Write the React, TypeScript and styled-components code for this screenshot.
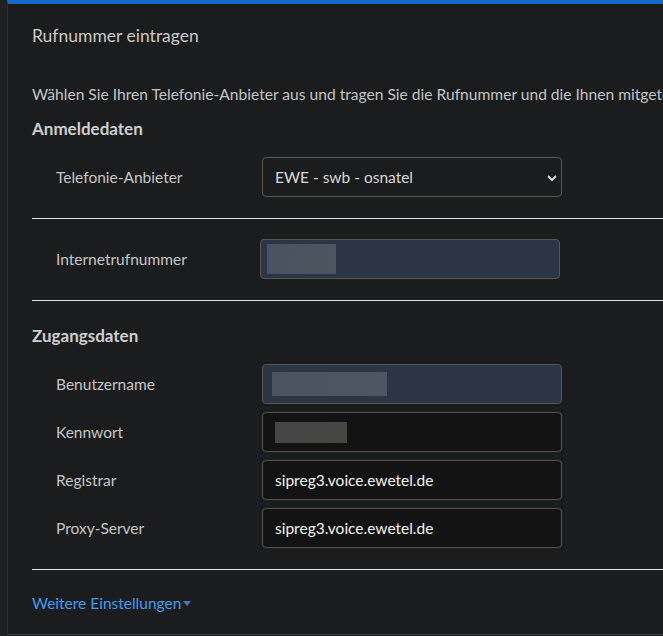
import React from 'react';
import styled, { createGlobalStyle } from 'styled-components';

const Global = createGlobalStyle`
  html, body {
    margin: 0;
    padding: 0;
    background: #1e2022;
    overflow: hidden;
  }
  body {
    font-family: Lato, "Liberation Sans", sans-serif;
  }
`;

const Page = styled.div`
  display: flex;
  height: 636px;
  width: 663px;
  overflow: hidden;
`;

const Strip = styled.div`
  width: 7px;
  flex: none;
  background: #1e2022;
`;

const Panel = styled.div`
  flex: none;
  width: 900px;
  height: 630px;
  background: #1b1c1e;
  border-left: 1px solid #2d2f31;
  border-top: 4px solid #176ac3;
  border-bottom: 1px solid #3a3c3e;
  padding-left: 24px;
  box-sizing: content-box;
`;

const Title = styled.h2`
  margin: 20px 0 0;
  font-size: 17.5px;
  line-height: 24px;
  font-weight: 400;
  color: #c9c9c9;
`;

const Intro = styled.p`
  margin: 36px 0 0;
  font-size: 15.6px;
  line-height: 20px;
  color: #c4c4c4;
  white-space: nowrap;
`;

const Heading = styled.h3<{ $top: number }>`
  margin: ${(p) => p.$top}px 0 0;
  font-size: 17px;
  line-height: 24px;
  font-weight: 700;
  color: #cfcfcf;
`;

const Rows = styled.div<{ $top: number }>`
  display: flex;
  flex-direction: column;
  gap: 8px;
  margin-top: ${(p) => p.$top}px;
`;

const Row = styled.div`
  display: flex;
  align-items: center;
  padding-left: 24px;
`;

const Label = styled.label`
  width: 206px;
  flex: none;
  font-size: 15.5px;
  color: #c6c6c6;
`;

const Field = styled.div<{ $bg: string; $shift?: number }>`
  position: relative;
  width: 300px;
  height: 40px;
  box-sizing: border-box;
  margin-left: ${(p) => p.$shift || 0}px;
  border: 1px solid #5a5750;
  border-radius: 4px;
  background: ${(p) => p.$bg};
  display: flex;
  align-items: center;
  padding-left: 12px;
  font-size: 15.5px;
  color: #f4f4f4;
`;

const Select = styled.select`
  appearance: none;
  width: 100%;
  height: 100%;
  border: 0;
  background: transparent;
  color: #d8d8d8;
  font: inherit;
  font-size: 15.5px;
  padding: 0;
  outline: none;
`;

const Chevron = styled.svg`
  position: absolute;
  right: 3px;
  top: 15px;
  pointer-events: none;
`;

const Redacted = styled.div<{ $w: number; $h: number; $x: number; $tone: string }>`
  width: ${(p) => p.$w}px;
  height: ${(p) => p.$h}px;
  margin-left: ${(p) => p.$x}px;
  background: ${(p) => p.$tone};
`;

const Divider = styled.hr<{ $top: number }>`
  margin: ${(p) => p.$top}px 0 0;
  border: 0;
  height: 1px;
  background: #e2e2e2;
`;

const More = styled.a`
  display: inline-flex;
  align-items: center;
  margin-top: 23px;
  font-size: 15.5px;
  line-height: 20px;
  color: #3f9cec;
  cursor: pointer;
`;

export default function App() {
  return (
    <>
      <Global />
      <Page>
        <Strip />
        <Panel>
          <Title>Rufnummer eintragen</Title>
          <Intro>
            Wählen Sie Ihren Telefonie-Anbieter aus und tragen Sie die Rufnummer und die Ihnen mitgeteilten Anmeldedaten ein.
          </Intro>

          <Heading $top={13}>Anmeldedaten</Heading>
          <Rows $top={16}>
            <Row>
              <Label>Telefonie-Anbieter</Label>
              <Field $bg="#1b1c1e">
                <Select defaultValue="ewe">
                  <option value="ewe">EWE - swb - osnatel</option>
                </Select>
                <Chevron width="12" height="10" viewBox="0 0 12 10">
                  <path d="M2 3 L6 7 L10 3" stroke="#d4d4d4" strokeWidth="2" fill="none" />
                </Chevron>
              </Field>
            </Row>
          </Rows>
          <Divider $top={21} />
          <Rows $top={20}>
            <Row>
              <Label>Internetrufnummer</Label>
              <Field $bg="#2b3544" $shift={-2}>
                <Redacted $w={69} $h={30} $x={-6} $tone="linear-gradient(90deg,#48515d,#4d5560)" />
              </Field>
            </Row>
          </Rows>
          <Divider $top={21} />

          <Heading $top={23}>Zugangsdaten</Heading>
          <Rows $top={16}>
            <Row>
              <Label>Benutzername</Label>
              <Field $bg="#2b3544">
                <Redacted $w={115} $h={24} $x={-3} $tone="linear-gradient(90deg,#4a535f,#4d5661)" />
              </Field>
            </Row>
            <Row>
              <Label>Kennwort</Label>
              <Field $bg="#131313">
                <Redacted $w={72} $h={21} $x={0} $tone="linear-gradient(90deg,#454545,#474643)" />
              </Field>
            </Row>
            <Row>
              <Label>Registrar</Label>
              <Field $bg="#131313">sipreg3.voice.ewetel.de</Field>
            </Row>
            <Row>
              <Label>Proxy-Server</Label>
              <Field $bg="#131313">sipreg3.voice.ewetel.de</Field>
            </Row>
          </Rows>
          <Divider $top={21} />

          <More>
            Weitere Einstellungen
            <svg width="12" height="8" viewBox="0 0 12 8">
              <path d="M2 2 L10 2 L6 7 Z" fill="#4a78c0" />
            </svg>
          </More>
        </Panel>
      </Page>
    </>
  );
}
